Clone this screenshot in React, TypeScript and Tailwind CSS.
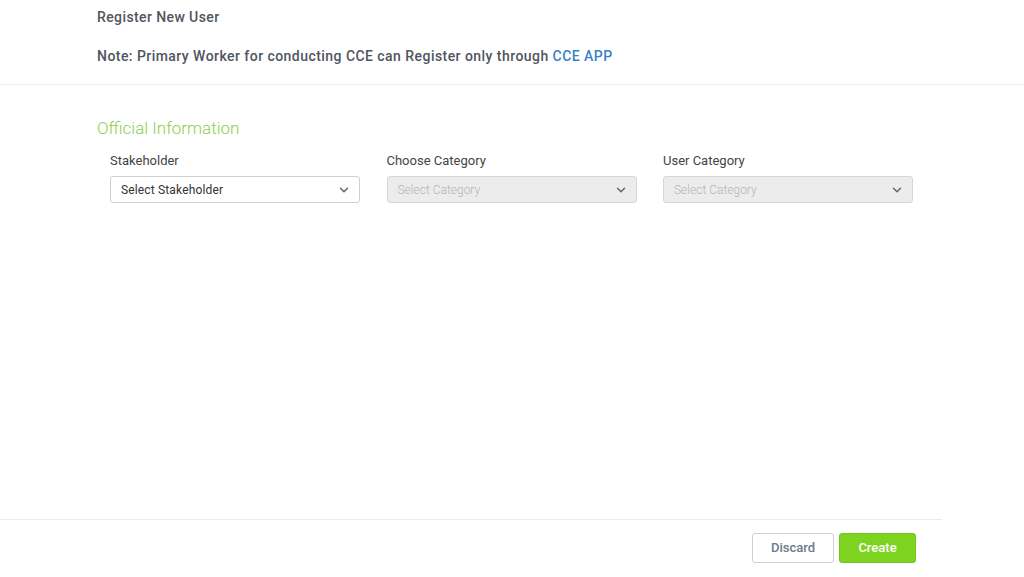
import { ChevronDown } from "lucide-react";

const fields = [
  { label: "Stakeholder", placeholder: "Select Stakeholder", disabled: false },
  { label: "Choose Category", placeholder: "Select Category", disabled: true },
  { label: "User Category", placeholder: "Select Category", disabled: true },
];

function SelectBox({ placeholder, disabled }: { placeholder: string; disabled: boolean }) {
  return (
    <div
      className={`flex h-[27px] w-[250px] items-center justify-between rounded-[3px] border pl-[10px] pr-[8px] ${
        disabled ? "border-[#d6d6d6] bg-[#ececec] text-[#b4b4b4] font-light" : "border-[#cfcfcf] bg-white text-[#333]"
      }`}
    >
      <span className={`text-[12px] ${disabled ? "" : "tracking-[0.15px]"}`}>{placeholder}</span>
      <ChevronDown size={14} strokeWidth={2.5} className="text-[#666]" />
    </div>
  );
}

export default function App() {
  return (
    <div className="flex h-[577px] w-[1024px] flex-col bg-white font-['Roboto',sans-serif]">
      <div className="border-b border-[#eef2ee] pl-[97px] pb-[17px]">
        <div className="pt-[7px] text-[14px] font-medium tracking-[0.4px] text-[#505560]">Register New User</div>
        <div className="mt-[18px] text-[14px] font-medium tracking-[0.45px] text-[#505560]">
          Note: Primary Worker for conducting CCE can Register only through{" "}
          <span className="text-[#3b82c4]">CCE APP</span>
        </div>
      </div>

      <div className="flex-1 pl-[97px] pt-[31px]">
        <div className="text-[17px] font-light text-[#8ccf4d]">Official Information</div>
        <div className="mt-[9px] flex gap-[26.5px] pl-[13px]">
          {fields.map((f) => (
            <div key={f.label} className="flex flex-col gap-[6px]">
              <span className="text-[13px] text-[#444]">{f.label}</span>
              <SelectBox placeholder={f.placeholder} disabled={f.disabled} />
            </div>
          ))}
        </div>
      </div>

      <div className="w-[942px] border-t border-[#ececec] pb-[14px] pt-[13px]">
        <div className="flex justify-end gap-[5px] pr-[26px]">
          <button className="h-[30px] w-[82px] rounded-[3px] border border-[#cfcfcf] bg-white text-[13px] font-medium text-[#6d7b8c]">
            Discard
          </button>
          <button className="h-[30px] w-[77px] rounded-[3px] border border-[#72c51c] bg-[#7ed321] text-[13px] font-medium text-white">
            Create
          </button>
        </div>
      </div>
    </div>
  );
}
